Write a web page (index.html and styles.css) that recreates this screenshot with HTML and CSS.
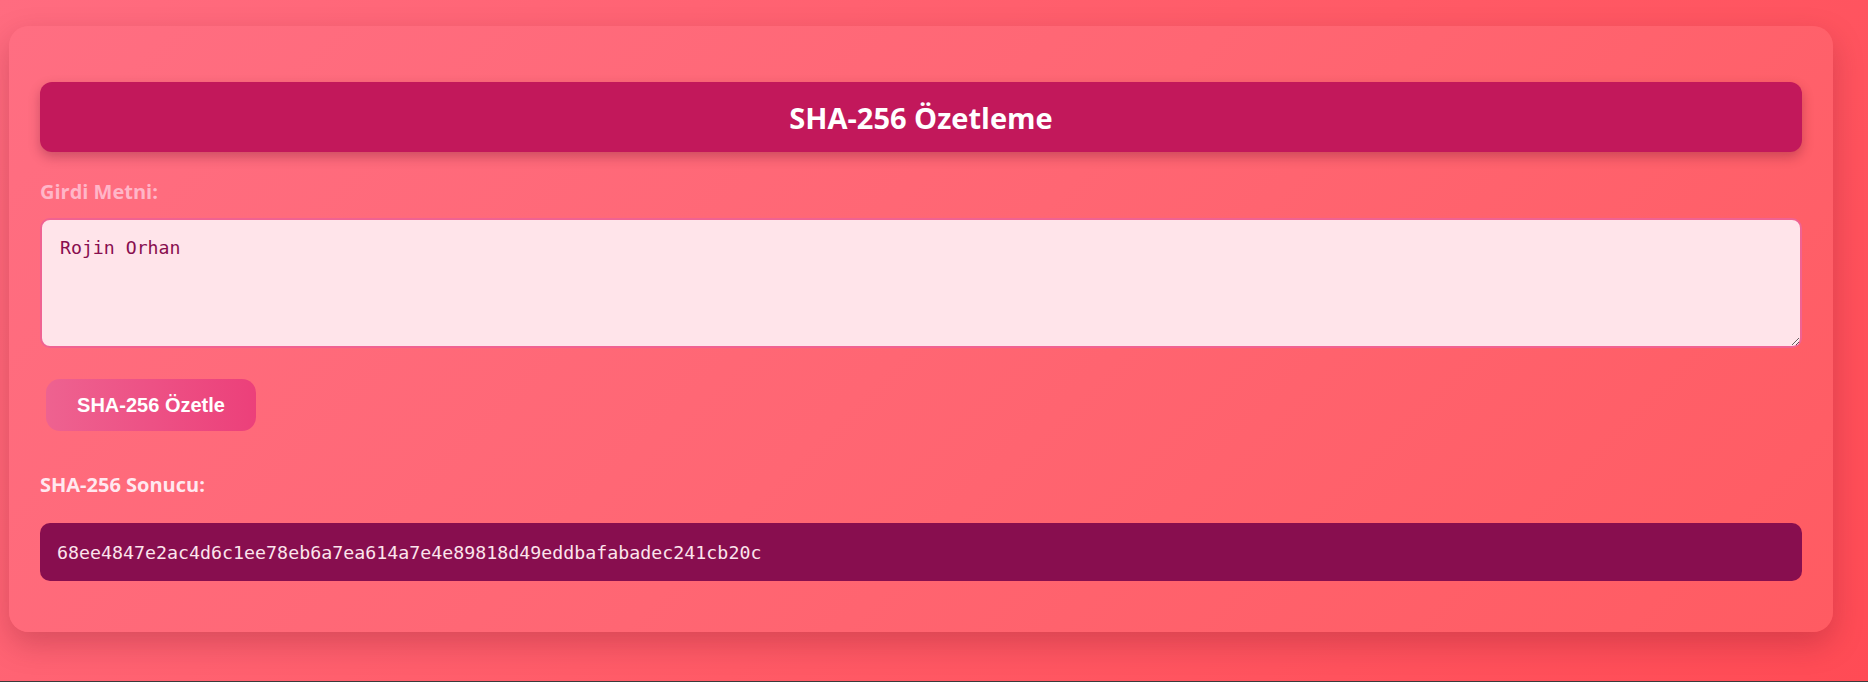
FILE: index.html
```html
<!DOCTYPE html>
<html lang="tr">
<head>
<meta charset="utf-8">
<title>SHA-256 Özetleme</title>
<link rel="stylesheet" href="styles.css">
</head>
<body>
<main class="card">
  <h1 class="title">SHA-256 Özetleme</h1>
  <label class="label label-input" for="girdi">Girdi Metni:</label>
  <textarea id="girdi" class="input" spellcheck="false">Rojin Orhan</textarea>
  <button class="btn" type="button">SHA-256 Özetle</button>
  <div class="label label-result">SHA-256 Sonucu:</div>
  <div class="result">68ee4847e2ac4d6c1ee78eb6a7ea614a7e4e89818d49eddbafabadec241cb20c</div>
</main>
</body>
</html>
```

FILE: styles.css
```css
html {
  background: #3a3a3a;
  margin: 0;
  padding: 0;
}

body {
  margin: 0;
  height: 681px;
  padding: 26px 35px 0 9px;
  box-sizing: border-box;
  background: linear-gradient(135deg, #ff6c80 0%, #ff5a66 55%, #ff4b55 100%);
  font-family: "Open Sans", "Noto Sans", sans-serif;
  overflow: hidden;
}

.card {
  display: flex;
  flex-direction: column;
  align-items: stretch;
  padding: 56px 31px 51px 31px;
  border-radius: 20px;
  background: linear-gradient(135deg, #ff6e82 0%, #ff6673 50%, #ff5b62 100%);
  box-shadow: 0 12px 30px rgba(120, 20, 40, 0.28);
}

.title {
  margin: 0;
  height: 70px;
  display: flex;
  align-items: center;
  justify-content: center;
  background: #c2185b;
  color: #ffffff;
  border-radius: 12px;
  font-size: 29px;
  font-weight: 700;
  box-shadow: 0 5px 12px rgba(90, 10, 40, 0.3);
}

.label {
  font-size: 20px;
  font-weight: 700;
  line-height: 27px;
}

.label-input {
  margin-top: 26px;
  color: #ffb6c8;
}

.input {
  margin-top: 13px;
  height: 130px;
  box-sizing: border-box;
  padding: 16px 18px;
  border: 2px solid #f06292;
  border-radius: 10px;
  background: #ffe4ea;
  color: #880e4f;
  font-family: "DejaVu Sans Mono", "Liberation Mono", monospace;
  font-size: 18.2px;
  line-height: 24px;
  resize: vertical;
  outline: none;
}

.btn {
  align-self: flex-start;
  margin: 31px 0 0 6px;
  width: 210px;
  height: 52px;
  border: none;
  border-radius: 14px;
  background: linear-gradient(90deg, #ee6290 0%, #ec407a 100%);
  color: #ffffff;
  font-family: "Liberation Sans", Arial, sans-serif;
  font-size: 20px;
  font-weight: 700;
  cursor: pointer;
}

.label-result {
  margin-top: 40px;
  color: #ffe8ef;
}

.result {
  margin-top: 25px;
  height: 58px;
  box-sizing: border-box;
  display: flex;
  align-items: center;
  padding: 0 17px;
  background: #880e4f;
  color: #fce4ec;
  border-radius: 10px;
  font-family: "DejaVu Sans Mono", "Liberation Mono", monospace;
  font-size: 18.3px;
}
```
